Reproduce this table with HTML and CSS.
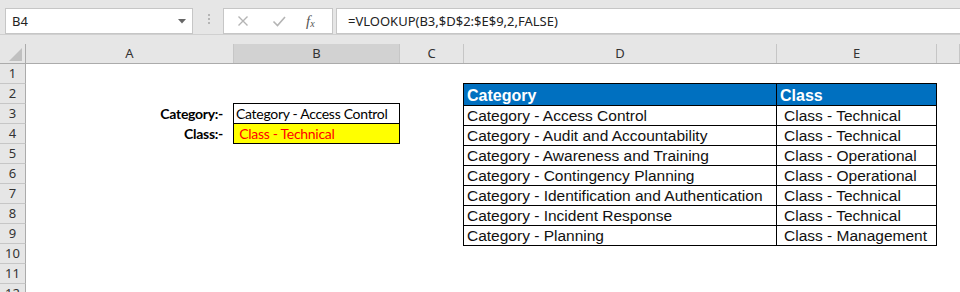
FILE: index.html
```html
<!DOCTYPE html>
<html lang="en">
<head>
    <meta charset="UTF-8">
    <title>VLOOKUP - Category to Class</title>
    <link rel="stylesheet" href="styles.css">
</head>
<body>
    <!-- name box + formula bar -->
    <div class="formula-bar">
        <div class="name-box">
            <span>B4</span>
            <svg class="drop" width="8" height="5" viewBox="0 0 8 5"><path d="M0 0H8L4 4.5Z" fill="#666"/></svg>
        </div>
        <div class="grip"><i></i><i></i><i></i></div>
        <div class="fx-buttons">
            <svg width="14" height="14" viewBox="0 0 14 14"><path d="M2.5 2.5L11.5 11.5M11.5 2.5L2.5 11.5" stroke="#b4b4b4" stroke-width="1.4" fill="none"/></svg>
            <svg width="14" height="14" viewBox="0 0 14 14"><path d="M1.5 7.5L5.5 11.5L13 3" stroke="#b4b4b4" stroke-width="1.6" fill="none"/></svg>
            <span class="fx"><i>f</i><sub>x</sub></span>
        </div>
        <div class="formula-input">=VLOOKUP(B3,$D$2:$E$9,2,FALSE)</div>
    </div>

    <div class="sheet">
        <!-- column headers -->
        <div class="col-head corner"><span><b class="corner-mark"></b></span></div>
        <div class="col-head"><span>A</span></div>
        <div class="col-head selected"><span>B</span></div>
        <div class="col-head"><span>C</span></div>
        <div class="col-head"><span>D</span></div>
        <div class="col-head"><span>E</span></div>
        <div class="col-head"><span></span></div>

        <!-- row numbers -->
        <div class="row-head">1</div>
        <div class="row-head">2</div>
        <div class="row-head">3</div>
        <div class="row-head">4</div>
        <div class="row-head">5</div>
        <div class="row-head">6</div>
        <div class="row-head">7</div>
        <div class="row-head">8</div>
        <div class="row-head">9</div>
        <div class="row-head">10</div>
        <div class="row-head">11</div>
        <div class="row-head">12</div>

        <!-- lookup input / result -->
        <div class="label label-cat">Category:-</div>
        <div class="label label-class">Class:-</div>
        <div class="lookup">
            <div class="lookup-cell">Category - Access Control</div>
            <div class="lookup-cell result">&nbsp;Class - Technical</div>
        </div>

        <!-- category/class table D2:E9 -->
        <div class="table-wrap">
            <table class="data">
                <colgroup>
                    <col class="col-cat">
                    <col>
                </colgroup>
                <tr><th>Category</th><th>Class</th></tr>
                <tr><td>Category - Access Control</td><td class="cls">Class - Technical</td></tr>
                <tr><td>Category - Audit and Accountability</td><td class="cls">Class - Technical</td></tr>
                <tr><td>Category - Awareness and Training</td><td class="cls">Class - Operational</td></tr>
                <tr><td>Category - Contingency Planning</td><td class="cls">Class - Operational</td></tr>
                <tr><td>Category - Identification and Authentication</td><td class="cls">Class - Technical</td></tr>
                <tr><td>Category - Incident Response</td><td class="cls">Class - Technical</td></tr>
                <tr><td>Category - Planning</td><td class="cls">Class - Management</td></tr>
            </table>
        </div>
    </div>
</body>
</html>
```

FILE: styles.css
```css
body {
    margin: 0;
    background: #fff;
    overflow: hidden;
    font-family: "Liberation Sans", Arial, sans-serif;
}

/* formula bar */
.formula-bar {
    display: flex;
    align-items: flex-start;
    height: 35px;
    box-sizing: border-box;
    padding: 8px 0 0 5px;
    background: #e6e6e6;
    border-bottom: 1px solid #d0d0d0;
    font-family: "Noto Sans", sans-serif;
    font-size: 13px;
    color: #222;
}

.name-box {
    display: flex;
    align-items: center;
    justify-content: space-between;
    width: 188px;
    height: 26px;
    box-sizing: border-box;
    padding: 0 6px 0 6px;
    background: #fff;
    border: 1px solid #c6c6c6;
}

.grip {
    display: flex;
    flex-direction: column;
    gap: 2px;
    margin: 6px 0 0 15px;
}

.grip i {
    display: block;
    width: 2px;
    height: 2px;
    background: #b5b5b5;
}

.fx-buttons {
    display: flex;
    align-items: center;
    width: 110px;
    height: 26px;
    box-sizing: border-box;
    margin-left: 13px;
    padding-left: 12px;
    gap: 22px;
    background: #fff;
    border: 1px solid #c6c6c6;
}

.fx {
    margin-left: -2px;
    font-family: "Liberation Serif", serif;
    font-size: 15px;
    color: #555;
}

.fx sub {
    font-size: 10px;
    font-style: italic;
    vertical-align: -1px;
}

.formula-input {
    flex: 1;
    height: 26px;
    box-sizing: border-box;
    margin-left: 3px;
    padding-left: 11px;
    line-height: 24px;
    background: #fff;
    border: 1px solid #c6c6c6;
    border-right: none;
}

/* grid */
.sheet {
    display: grid;
    grid-template-columns: 26px 208px 166px 64px 313px 160px 1fr;
    grid-template-rows: 29px repeat(12, 20px);
    font-family: "Noto Sans", sans-serif;
    font-size: 13px;
}

.col-head {
    display: flex;
    align-items: flex-end;
    background: #e6e6e6;
    border-bottom: 1px solid #ababab;
}

.col-head span {
    display: block;
    width: 100%;
    height: 19px;
    line-height: 19px;
    text-align: center;
    color: #333;
    border-right: 1px solid #c6c6c6;
}

.col-head.selected span {
    background: #d2d2d2;
}

.corner span {
    position: relative;
    border-right-color: #ababab;
}

.corner-mark {
    position: absolute;
    right: 3px;
    bottom: 2px;
    width: 0;
    height: 0;
    border-left: 13px solid transparent;
    border-bottom: 13px solid #c0c0c0;
}

.row-head {
    grid-column: 1;
    box-sizing: border-box;
    background: #e6e6e6;
    border-right: 1px solid #ababab;
    border-bottom: 1px solid #c6c6c6;
    line-height: 19px;
    text-align: center;
    color: #333;
}

/* labels and lookup cells */
.label {
    grid-column: 2;
    padding-right: 11px;
    line-height: 20px;
    text-align: right;
    font-family: Lato, sans-serif;
    font-weight: bold;
    font-size: 14px;
    letter-spacing: -0.3px;
}

.label-cat { grid-row: 4; }
.label-class { grid-row: 5; }

.lookup {
    grid-column: 3;
    grid-row: 4 / span 2;
    margin: -1px 0 0 -1px;
    border: 1px solid #000;
    font-family: Lato, sans-serif;
    font-size: 14px;
    letter-spacing: -0.3px;
}

.lookup-cell {
    height: 19px;
    line-height: 19px;
    padding-left: 2px;
    white-space: nowrap;
}

.lookup-cell:first-child {
    border-bottom: 1px solid #000;
}

.lookup-cell.result {
    background: #ffff00;
    color: #ff0000;
}

/* table */
.table-wrap {
    grid-column: 5 / span 2;
    grid-row: 3 / span 8;
    align-self: start;
    margin: -1px 0 0 -1px;
}

.data {
    width: 100%;
    table-layout: fixed;
    border-collapse: collapse;
    font-family: "Liberation Sans", Arial, sans-serif;
    font-size: 15.5px;
    color: #111;
}

.col-cat {
    width: 313px;
}

.data th,
.data td {
    height: 19px;
    padding: 0 0 0 3px;
    line-height: 19px;
    border: 1px solid #000;
    text-align: left;
    white-space: nowrap;
    overflow: hidden;
}

.data th {
    height: 20px;
    padding-top: 1px;
    background: #0070c0;
    color: #fff;
    font-size: 16px;
    font-weight: bold;
}

.data td.cls {
    padding-left: 7px;
}
```
